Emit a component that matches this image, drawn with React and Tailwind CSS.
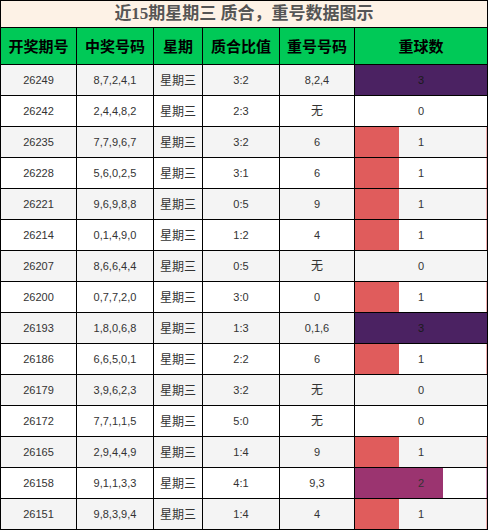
import React from 'react';

const rows = [
	['26249', '8,7,2,4,1', '3:2', '8,2,4', 3],
	['26242', '2,4,4,8,2', '2:3', '无', 0],
	['26235', '7,7,9,6,7', '3:2', '6', 1],
	['26228', '5,6,0,2,5', '3:1', '6', 1],
	['26221', '9,6,9,8,8', '0:5', '9', 1],
	['26214', '0,1,4,9,0', '1:2', '4', 1],
	['26207', '8,6,6,4,4', '0:5', '无', 0],
	['26200', '0,7,7,2,0', '3:0', '0', 1],
	['26193', '1,8,0,6,8', '1:3', '0,1,6', 3],
	['26186', '6,6,5,0,1', '2:2', '6', 1],
	['26179', '3,9,6,2,3', '3:2', '无', 0],
	['26172', '7,7,1,1,5', '5:0', '无', 0],
	['26165', '2,9,4,4,9', '1:4', '9', 1],
	['26158', '9,1,1,3,3', '4:1', '9,3', 2],
	['26151', '9,8,3,9,4', '1:4', '4', 1],
];

const barColor = { 1: 'bg-[#e05c5c]', 2: 'bg-[#9b3470]', 3: 'bg-[#4b2262]' };
const barWidth = { 1: 'w-[44px]', 2: 'w-[88px]', 3: 'w-full' };
const edgeColor = { 1: 'bg-[#f2b0b0]', 2: 'bg-[#d59ab8]', 3: 'bg-[#4b2262]' };

const cols = 'grid grid-cols-[76px_77px_49px_77px_75px_133px]';
const cell = 'flex items-center justify-center border-r border-b border-black';

const App = () => {
	return (
		<div className="w-[488px] border-l border-t border-black bg-white" style={{ fontFamily: '"Liberation Sans", "Noto Sans CJK SC", sans-serif' }}>
			<div
				className="h-[27px] flex items-center justify-center border-r border-b border-black bg-[#fdf2e6] text-[17px] font-bold text-[#555555]"
				style={{ fontFamily: '"Liberation Serif", "Noto Sans CJK SC", serif' }}
			>
				近15期星期三 质合，重号数据图示
			</div>
			<div className={`${cols} h-[37px] bg-[#00c957] text-[15px] font-bold text-black`} style={{ fontFamily: '"Noto Sans CJK SC", sans-serif' }}>
				{['开奖期号', '中奖号码', '星期', '质合比值', '重号号码', '重球数'].map((h) => (
					<div key={h} className={cell}>{h}</div>
				))}
			</div>
			{rows.map((r, i) => (
				<div key={r[0]} className={`${cols} h-[31px] text-[11px] text-[#333333] ${i % 2 === 0 ? 'bg-[#f4f4f4]' : 'bg-white'}`}>
					<div className={cell}>{r[0]}</div>
					<div className={cell}>{r[1]}</div>
					<div className={`${cell} text-[12px]`} style={{ fontFamily: '"Noto Sans CJK SC", sans-serif' }}>星期三</div>
					<div className={cell}>{r[2]}</div>
					<div className={`${cell} ${r[3] === '无' ? 'text-[12px]' : ''}`}>{r[3]}</div>
					<div className={`${cell} relative`}>
						{r[4] > 0 && (
							<>
								<div className={`absolute left-0 top-0 bottom-0 ${barWidth[r[4]]} ${barColor[r[4]]}`}></div>
								{r[4] < 3 && <div className={`absolute top-0 bottom-0 right-0 w-px ${edgeColor[r[4]]}`}></div>}
							</>
						)}
						<span className={`relative ${r[4] === 3 ? 'text-[#1a1a1a]' : ''}`}>{r[4]}</span>
					</div>
				</div>
			))}
		</div>
	);
};

export default App;
